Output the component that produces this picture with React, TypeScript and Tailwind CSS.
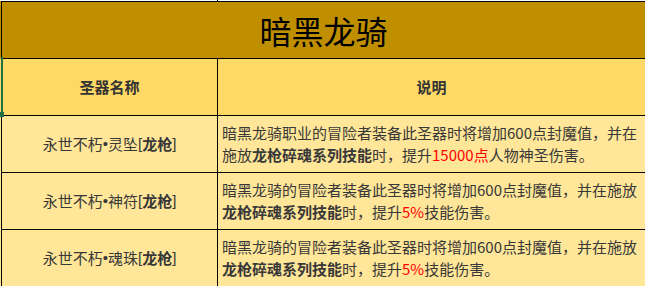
const FONT = { fontFamily: '"Noto Sans CJK SC", "Noto Sans", sans-serif' };

const ROWS = [
  {
    name: "灵坠",
    lines: [
      <>暗黑龙骑职业的冒险者装备此圣器时将增加600点封魔值，并在</>,
      <>
        施放<b>龙枪碎魂系列技能</b>时，提升<span className="text-[#ff0000]">15000点</span>人物神圣伤害。
      </>,
    ],
  },
  {
    name: "神符",
    lines: [
      <>暗黑龙骑的冒险者装备此圣器时将增加600点封魔值，并在施放</>,
      <>
        <b>龙枪碎魂系列技能</b>时，提升<span className="text-[#ff0000]">5%</span>技能伤害。
      </>,
    ],
  },
  {
    name: "魂珠",
    lines: [
      <>暗黑龙骑的冒险者装备此圣器时将增加600点封魔值，并在施放</>,
      <>
        <b>龙枪碎魂系列技能</b>时，提升<span className="text-[#ff0000]">5%</span>技能伤害。
      </>,
    ],
  },
];

export default function App() {
  return (
    <div className="relative h-[286px] w-[645px] overflow-hidden bg-white text-[#383838]" style={FONT}>
      {/* sliver of the row above */}
      <div className="flex h-px">
        <div className="w-[217px]" />
        <div className="w-px bg-black" />
      </div>

      {/* title band */}
      <div className="bg-[#bf8f00] pl-px">
        <div className="flex h-[58px] items-center justify-center border-y border-l border-black">
          <span className="text-[32px] leading-none text-black">暗黑龙骑</span>
        </div>
      </div>

      {/* header */}
      <div className="bg-[#ffd966] pl-px">
        <div className="grid h-[57px] grid-cols-[216px_1fr] border-b border-l border-black text-[15px] font-bold text-[#333]">
          <div className="flex items-center justify-center border-r border-black">圣器名称</div>
          <div className="flex items-center justify-center">说明</div>
        </div>
      </div>

      {ROWS.map((r) => (
        <div key={r.name} className="bg-[#ffe699] pl-px">
          <div className="grid h-[57px] grid-cols-[216px_1fr] border-b border-l border-black text-[15px]">
            <div className="flex items-center justify-center border-r border-black whitespace-nowrap">
              永世不朽<span className="font-['Liberation_Sans']">•</span>
              {r.name}
              <span className="font-['Liberation_Sans']">[</span>
              <b>龙枪</b>
              <span className="font-['Liberation_Sans']">]</span>
            </div>
            <div className="flex flex-col justify-center pl-[4px] leading-[22px] whitespace-nowrap">
              {r.lines.map((l, i) => (
                <div key={i}>{l}</div>
              ))}
            </div>
          </div>
        </div>
      ))}

      {/* spreadsheet selection marker */}
      <div className="absolute left-px top-[57px] h-[56px] w-[2px] bg-[#217346]" />
      <div className="absolute left-0 top-[112px] h-[5px] w-[4px] bg-[#217346]" />
    </div>
  );
}
